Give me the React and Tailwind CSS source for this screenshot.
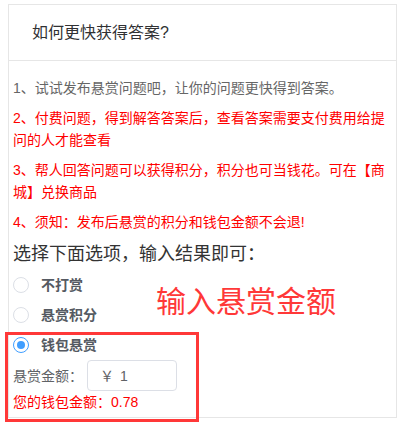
import React from "react";

const font = { fontFamily: '"Liberation Sans", "Noto Sans CJK SC", sans-serif' };

function Radio({ checked, label }) {
  return (
    <label className="flex h-[30px] items-center">
      <span
        className={
          checked
            ? "flex h-[16px] w-[16px] items-center justify-center rounded-full border border-[#409eff] bg-white"
            : "h-[16px] w-[16px] rounded-full border border-[#dcdfe6] bg-white"
        }
      >
        {checked && <span className="h-[8px] w-[8px] rounded-full bg-[#409eff]" />}
      </span>
      <span className="ml-[12px] text-[14px] font-semibold text-[#555a62]">{label}</span>
    </label>
  );
}

export default function App() {
  return (
    <div className="relative h-[431px] w-[408px] bg-white" style={font}>
      <div className="ml-[8px] pt-[4px]">
        <div className="w-[389px] border border-[#e6e6e6] bg-white">
          {/* Header */}
          <div className="flex h-[56px] items-center border-b border-[#e6e6e6] pl-[23px]">
            <h2 className="text-[16px] text-[#303133]">如何更快获得答案?</h2>
          </div>

          {/* Body */}
          <div className="px-[4px] pb-[5px] pt-[16px] text-[14px] leading-[22px]">
            <p className="text-[#666]">1、试试发布悬赏问题吧，让你的问题更快得到答案。</p>
            <p className="mt-[8px] text-[#ff0000]">
              2、付费问题，得到解答答案后，查看答案需要支付费用给提问的人才能查看
            </p>
            <p className="mt-[8px] text-[#ff0000]">
              3、帮人回答问题可以获得积分，积分也可当钱花。可在【商城】兑换商品
            </p>
            <p className="mt-[8px] text-[#ff0000]">4、须知：发布后悬赏的积分和钱包金额不会退!</p>

            <p className="mt-[8px] text-[18px] leading-[26px] text-[#333]">选择下面选项，输入结果即可：</p>

            <div className="mt-[3px] flex flex-col">
              <Radio label="不打赏" />
              <Radio label="悬赏积分" />
              <Radio checked label="钱包悬赏" />
            </div>

            <div className="flex items-center">
              <span className="w-[74px] text-[#606266]">悬赏金额：</span>
              <div className="flex h-[31px] w-[90px] items-center rounded-[4px] border border-[#dcdfe6] pl-[12px] text-[#606266]">
                <span>￥</span>
                <span className="ml-[6px]">1</span>
              </div>
            </div>
            <p className="mt-[1px] leading-[20px] text-[#ff0000]">您的钱包金额：0.78</p>
          </div>
        </div>
      </div>

      {/* Annotation overlay */}
      <div className="absolute left-[5px] top-[332px] h-[90px] w-[194px] border-[3px] border-[#ff3838]" />
      <div className="absolute left-[156px] top-[284px] text-[30px] leading-[36px] text-[#ff3838]">
        输入悬赏金额
      </div>
    </div>
  );
}
